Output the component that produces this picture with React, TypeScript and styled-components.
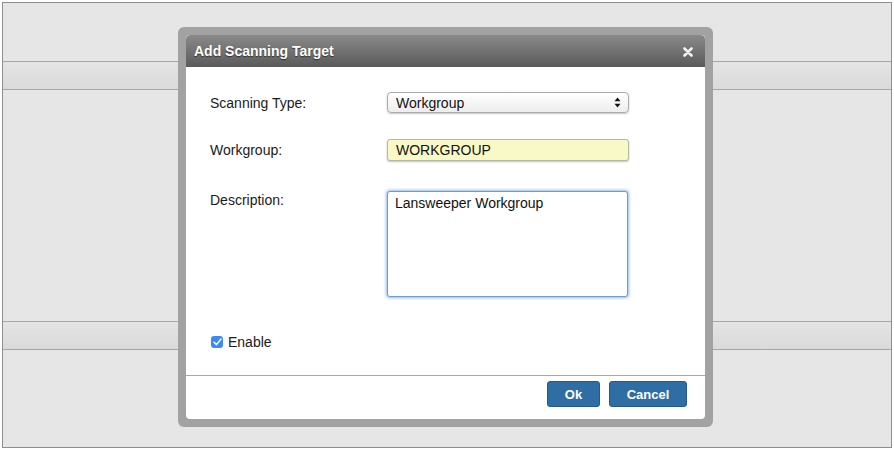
import React from "react";
import styled, { createGlobalStyle } from "styled-components";

const GlobalStyle = createGlobalStyle`
  html, body {
    margin: 0;
    padding: 0;
    background: #ffffff;
    font-family: "Liberation Sans", Arial, sans-serif;
  }
`;

export default function App() {
  return (
    <>
      <GlobalStyle />
      <Page>
        <Spacer h={58} />
        <Band />
        <Spacer h={231} />
        <Band />
        <Spacer h={0} grow />

        <Frame>
          <Dialog>
            <Header>
              <Title>Add Scanning Target</Title>
              <Close>
                <svg width="10" height="10" viewBox="0 0 10 10">
                  <path
                    d="M1.5 1.5 L8.5 8.5 M8.5 1.5 L1.5 8.5"
                    stroke="#f2f2f2"
                    strokeWidth="2.6"
                    strokeLinecap="round"
                  />
                </svg>
              </Close>
            </Header>

            <Body>
              <Row mt={25} center>
                <Label>Scanning Type:</Label>
                <Select>
                  <span>Workgroup</span>
                  <svg width="7" height="11" viewBox="0 0 7 11">
                    <path d="M3.5 0.5 L6.5 4.2 L0.5 4.2 Z" fill="#111" />
                    <path d="M3.5 10.5 L6.5 6.8 L0.5 6.8 Z" fill="#111" />
                  </svg>
                </Select>
              </Row>

              <Row mt={26} center>
                <Label>Workgroup:</Label>
                <TextInput>WORKGROUP</TextInput>
              </Row>

              <Row mt={30}>
                <Label pt={1}>Description:</Label>
                <TextArea>Lansweeper Workgroup</TextArea>
              </Row>

              <CheckRow>
                <Check>
                  <svg width="9" height="8" viewBox="0 0 9 8">
                    <path
                      d="M1 4.2 L3.5 6.6 L8 1"
                      stroke="#fff"
                      strokeWidth="1.5"
                      fill="none"
                      strokeLinecap="round"
                      strokeLinejoin="round"
                    />
                  </svg>
                </Check>
                <span>Enable</span>
              </CheckRow>
            </Body>

            <Footer>
              <Button w={53}>Ok</Button>
              <Button w={78}>Cancel</Button>
            </Footer>
          </Dialog>
        </Frame>
      </Page>
    </>
  );
}

const Page = styled.div`
  position: relative;
  margin: 2px 2px 0 2px;
  height: 444px;
  border: 1px solid #8e8e8e;
  background: #e6e6e6;
  display: flex;
  flex-direction: column;
`;

const Spacer = styled.div<{ h: number; grow?: boolean }>`
  height: ${(p) => p.h}px;
  flex: ${(p) => (p.grow ? 1 : "none")};
`;

const Band = styled.div`
  height: 27px;
  border-top: 1px solid #a6a6a6;
  border-bottom: 1px solid #a6a6a6;
  background: linear-gradient(#e4e4e4, #dadada);
`;

const Frame = styled.div`
  position: absolute;
  left: 175px;
  top: 24px;
  width: 519px;
  height: 384px;
  padding: 8px;
  background: #a2a2a2;
  border-radius: 6px;
  display: flex;
`;

const Dialog = styled.div`
  flex: 1;
  background: #ffffff;
  border-radius: 4px;
  display: flex;
  flex-direction: column;
  overflow: hidden;
`;

const Header = styled.div`
  height: 32px;
  flex: none;
  display: flex;
  align-items: center;
  justify-content: space-between;
  padding: 0 12px 0 8px;
  background: linear-gradient(#8a8a8a, #5a5a5a);
  border-radius: 4px 4px 0 0;
`;

const Title = styled.div`
  color: #ffffff;
  font-size: 14px;
  font-weight: bold;
  text-shadow: 0 1px 1px rgba(0, 0, 0, 0.55);
`;

const Close = styled.div`
  display: flex;
  margin-top: 2px;
`;

const Body = styled.div`
  flex: 1;
  padding: 0 0 0 24px;
  display: flex;
  flex-direction: column;
  font-size: 14px;
  color: #1a1a1a;
`;

const Row = styled.div<{ mt: number; center?: boolean }>`
  display: flex;
  align-items: ${(p) => (p.center ? "center" : "flex-start")};
  margin-top: ${(p) => p.mt}px;
`;

const Label = styled.div<{ pt?: number }>`
  width: 177px;
  flex: none;
  padding-top: ${(p) => p.pt || 0}px;
`;

const Select = styled.div`
  box-sizing: border-box;
  width: 242px;
  height: 21px;
  padding: 0 7px 0 8px;
  display: flex;
  align-items: center;
  justify-content: space-between;
  border: 1px solid #a9a9a9;
  border-radius: 4px;
  background: linear-gradient(#ffffff, #ededed);
  box-shadow: 0 1px 2px rgba(0, 0, 0, 0.22);
  color: #111;
`;

const TextInput = styled.div`
  box-sizing: border-box;
  width: 242px;
  height: 22px;
  padding: 0 8px;
  display: flex;
  align-items: center;
  border: 1px solid #b8b8a4;
  border-radius: 3px;
  background: #f9f9c6;
  box-shadow: 0 1px 2px rgba(0, 0, 0, 0.25);
  color: #111;
`;

const TextArea = styled.div`
  box-sizing: border-box;
  width: 241px;
  height: 106px;
  padding: 3px 7px;
  border: 1px solid #6a9be0;
  border-radius: 3px;
  background: #ffffff;
  box-shadow: 0 0 3px 1px #94b9f0;
  color: #111;
`;

const CheckRow = styled.div`
  display: flex;
  align-items: center;
  gap: 5px;
  margin-top: 37px;
  padding-left: 1px;
  font-size: 14px;
`;

const Check = styled.div`
  width: 12px;
  height: 12px;
  border-radius: 3px;
  background: #3d8af7;
  display: flex;
  align-items: center;
  justify-content: center;
`;

const Footer = styled.div`
  height: 38px;
  flex: none;
  border-top: 1px solid #a8a8a8;
  display: flex;
  justify-content: flex-end;
  gap: 9px;
  padding: 5px 18px 0 0;
`;

const Button = styled.div<{ w: number }>`
  box-sizing: border-box;
  width: ${(p) => p.w}px;
  height: 26px;
  display: flex;
  align-items: center;
  justify-content: center;
  background: #2f6ea4;
  border: 1px solid #24598a;
  border-radius: 3px;
  color: #ffffff;
  font-size: 13px;
  font-weight: bold;
`;
